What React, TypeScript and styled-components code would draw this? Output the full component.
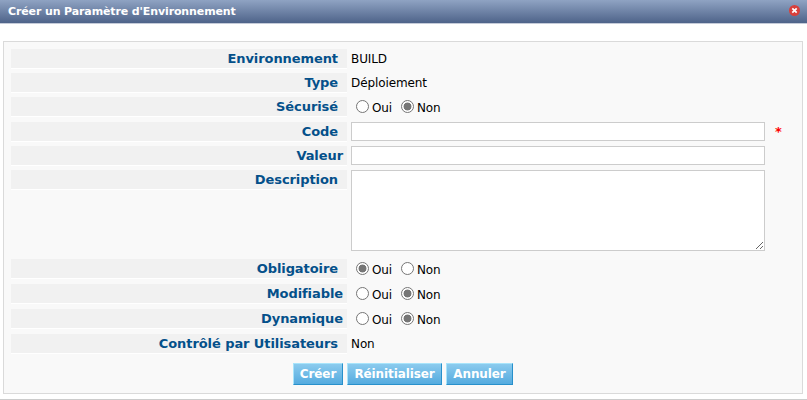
import React from 'react';
import styled, { createGlobalStyle } from 'styled-components';

const GlobalStyle = createGlobalStyle`
  * { box-sizing: border-box; }
  body { margin: 0; background: #fff; overflow: hidden; }
`;

const Window = styled.main`
  width: 807px;
  height: 400px;
  border-bottom: 1px solid #ccc;
  font-family: 'DejaVu Sans', sans-serif;
  font-size: 12px;
  color: #000;
`;

const TitleBar = styled.header`
  display: flex;
  align-items: flex-start;
  justify-content: space-between;
  height: 24px;
  padding: 4px 7px 0 8px;
  border-bottom: 1px solid #c5cbd9;
  background: linear-gradient(#8fa3c3, #4e6389);
`;

const Title = styled.h1`
  margin: 0;
  font: bold 11px/16px 'DejaVu Sans', sans-serif;
  letter-spacing: -0.12px;
  color: #fff;
  white-space: nowrap;
`;

const CloseButton = styled.button`
  display: flex;
  width: 11px;
  height: 11px;
  margin-top: 1px;
  padding: 0;
  border: 0;
  background: none;
`;

const Panel = styled.form`
  width: 800px;
  height: 353px;
  margin: 17px 0 0 3px;
  padding: 7px;
  border: 1px solid #dadada;
  background: #f9f9f9;
`;

const Row = styled.div<{ $height?: number }>`
  display: flex;
  align-items: flex-start;
  gap: 4px;
  height: ${(p) => p.$height ?? 24}px;
`;

const Label = styled.div<{ $optional?: boolean }>`
  width: 336px;
  height: 20px;
  padding-right: ${(p) => (p.$optional ? 4 : 9)}px;
  border-bottom: 1px solid #fff;
  background: #f1f1f1;
  color: #04508a;
  font: bold 13px/19px 'DejaVu Sans', sans-serif;
  letter-spacing: -0.08px;
  text-align: right;
  white-space: nowrap;
`;

const Value = styled.span`
  line-height: 20px;
  letter-spacing: -0.1px;
`;

const Radios = styled.div`
  display: flex;
  padding: 3px 0 0 5px;
`;

const Choice = styled.label`
  display: flex;
  width: 45px;
  gap: 3px;
  line-height: 16px;
  letter-spacing: -0.2px;
`;

const Radio = styled.input`
  appearance: none;
  flex: none;
  width: 13px;
  height: 13px;
  margin: 0;
  border: 1px solid #767676;
  border-radius: 50%;
  background: #fff;
  &:checked {
    background: radial-gradient(circle, #767676 3.6px, #fff 4.3px);
  }
`;

const TextInput = styled.input`
  width: 414px;
  height: 19px;
  padding: 1px 2px;
  border: 1px solid #ccc;
  background: #fff;
`;

const TextArea = styled.textarea`
  display: block;
  width: 414px;
  height: 81px;
  border: 1px solid #ccc;
  background: #fff;
  resize: both;
`;

const Required = styled.span`
  margin-left: 6px;
  color: #f00;
  font: bold 13px/19px 'DejaVu Sans', sans-serif;
`;

const Actions = styled.div`
  display: flex;
  gap: 4px;
  padding: 5px 0 0 282px;
`;

const Action = styled.button<{ $width: number }>`
  width: ${(p) => p.$width}px;
  height: 22px;
  padding: 0;
  border: 1px solid;
  border-color: #a8e4fb #2890cb #2890cb #a8e4fb;
  background: linear-gradient(#8bcbee, #55abdf);
  color: #fff;
  font: bold 12px/18px 'DejaVu Sans', sans-serif;
  letter-spacing: -0.1px;
  white-space: nowrap;
`;

function YesNo({ name, yes }: { name: string; yes?: boolean }) {
  return (
    <Radios>
      <Choice><Radio type="radio" name={name} defaultChecked={yes} />Oui</Choice>
      <Choice><Radio type="radio" name={name} defaultChecked={!yes} />Non</Choice>
    </Radios>
  );
}

export default function App() {
  return (
    <Window>
      <GlobalStyle />
      <TitleBar>
        <Title>Créer un Paramètre d'Environnement</Title>
        <CloseButton aria-label="Fermer">
          <svg width="11" height="11" viewBox="0 0 11 11">
            <circle cx="5.5" cy="5.5" r="5.5" fill="#d8403c" />
            <path d="M3.3 3.3l4.4 4.4M7.7 3.3L3.3 7.7" stroke="#fff" strokeWidth="1.7" />
          </svg>
        </CloseButton>
      </TitleBar>
      <Panel>
        <Row><Label>Environnement</Label><Value>BUILD</Value></Row>
        <Row><Label>Type</Label><Value>Déploiement</Value></Row>
        <Row $height={25}><Label>Sécurisé</Label><YesNo name="secure" /></Row>
        <Row><Label>Code</Label><TextInput /><Required>*</Required></Row>
        <Row><Label $optional>Valeur</Label><TextInput /></Row>
        <Row $height={89}><Label>Description</Label><TextArea /></Row>
        <Row $height={25}><Label>Obligatoire</Label><YesNo name="mandatory" yes /></Row>
        <Row $height={25}><Label $optional>Modifiable</Label><YesNo name="editable" /></Row>
        <Row $height={25}><Label $optional>Dynamique</Label><YesNo name="dynamic" /></Row>
        <Row><Label>Contrôlé par Utilisateurs</Label><Value>Non</Value></Row>
        <Actions>
          <Action type="button" $width={50}>Créer</Action>
          <Action type="button" $width={95}>Réinitialiser</Action>
          <Action type="button" $width={67}>Annuler</Action>
        </Actions>
      </Panel>
    </Window>
  );
}
